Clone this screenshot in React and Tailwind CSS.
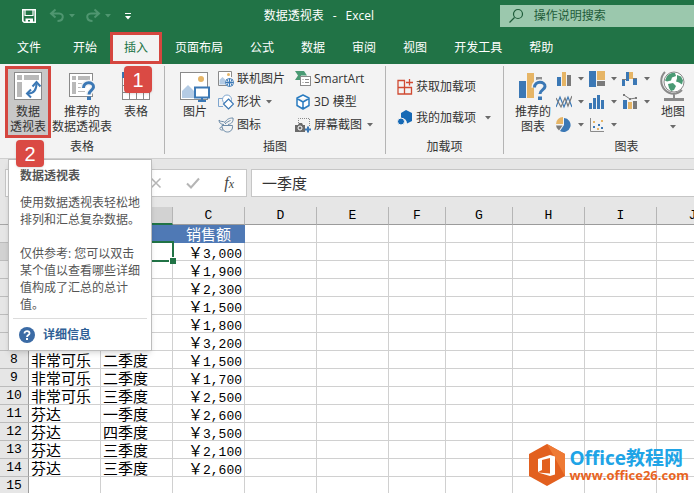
const tabs = ['页面布局', '公式', '数据', '审阅', '视图', '开发工具', '帮助'];

const columns = ['A', 'B', 'C', 'D', 'E', 'F', 'G', 'H', 'I', 'J'];

const rows = [
  ['', '', '销售额'],
  ['', '一季度', '3,000'],
  ['', '', '1,900'],
  ['', '', '2,300'],
  ['', '', '1,500'],
  ['', '', '1,800'],
  ['', '', '3,200'],
  ['非常可乐', '二季度', '1,500'],
  ['非常可乐', '二季度', '1,700'],
  ['非常可乐', '三季度', '2,500'],
  ['芬达', '一季度', '2,600'],
  ['芬达', '四季度', '3,500'],
  ['芬达', '三季度', '2,100'],
  ['芬达', '三季度', '2,600'],
  ['', '', ''],
];

const blue = '#3b78b5';
const sand = '#e6b566';
const grey = '#7a7a7a';

function Caret({ className = 'text-[#6a6a6a]' }) {
  return (
    <svg className={`shrink-0 ${className}`} width="6" height="4" viewBox="0 0 6 4" fill="currentColor">
      <path d="M0 0h6L3 3.5z" />
    </svg>
  );
}

function Icon({ size = 16, children }) {
  return (
    <svg className="shrink-0" width={size} height={size} viewBox={`0 0 ${size} ${size}`} fill="none">
      {children}
    </svg>
  );
}

function SaveIcon() {
  return (
    <Icon>
      <path d="M1.8 1.8h12.4v12.4H3.2l-1.4-1.4z" stroke="#fff" strokeWidth="1.6" />
      <path d="M4 2v5.5h8V2" stroke="#fff" strokeWidth="1.2" />
      <path d="M4.5 10.5h7.5V14H9v-2H7v2H4.5z" fill="#fff" />
    </Icon>
  );
}

function UndoIcon() {
  return (
    <Icon>
      <path d="M6.5 1.5 2 5.5l4.5 4M2.5 5.5H10c5.5 0 5 7.5-1.5 7.5" stroke="#4f9670" strokeWidth="2" />
    </Icon>
  );
}

function RedoIcon() {
  return (
    <Icon>
      <path d="M9.5 1.5 14 5.5l-4.5 4M13.5 5.5H6c-5.5 0-5 7.5 1.5 7.5" stroke="#4f9670" strokeWidth="2" />
    </Icon>
  );
}

function PivotIcon() {
  return (
    <Icon size={28}>
      <rect x=".5" y=".5" width="27" height="27" fill="#fff" stroke="#8a8a8a" />
      <path d="M3 3h5v5H3zM10 3h15v5H10zM3 10h5v15H3z" fill="#b9b9b9" />
      <path d="M14 21.5c6 0 8.5-3 8.5-10" stroke={blue} strokeWidth="2" />
      <path d="m18.5 14.5 4-4.5 4 4.5M17 17.5l-4 4 4 4" stroke={blue} strokeWidth="2" />
    </Icon>
  );
}

function SuggestPivotIcon() {
  return (
    <Icon size={28}>
      <rect x="1.5" y="1.5" width="23" height="23" fill="#fff" stroke="#8a8a8a" />
      <path d="M4 4h4v4H4zM10 4h12v4H10zM4 10h4v12H4z" fill="#b9b9b9" />
      <path d="M10 11.5h5M10 15.5h7M10 19.5h7" stroke="#b9b9b9" />
      <path d="M15.5 16c-.3-7 10.5-6.5 10-1-.3 3.5-4.5 3.5-4.5 8" stroke="#f3f3f3" strokeWidth="6" />
      <path d="M15.5 16c-.3-7 10.5-6.5 10-1-.3 3.5-4.5 3.5-4.5 7.5" stroke={blue} strokeWidth="3" />
      <rect x="19" y="24.5" width="4" height="3.5" fill={blue} />
    </Icon>
  );
}

function TableIcon() {
  return (
    <Icon size={28}>
      <rect x=".5" y=".5" width="27" height="27" fill="#fff" stroke="#8a8a8a" />
      <path d="M0 0h28v6H0z" fill={blue} />
      <path d="M0 13.5h28M0 20.5h28M7.5 6v22M14.5 6v22M21.5 6v22" stroke="#8a8a8a" />
    </Icon>
  );
}

function PictureIcon() {
  return (
    <Icon size={30}>
      <rect x=".5" y=".5" width="27" height="27" fill="#fff" stroke="#8a8a8a" />
      <circle cx="21" cy="7" r="3" fill={sand} />
      <path d="M2 26V19l6-6 7 7v6z" fill="#b4cbe4" />
      <rect x="15" y="15.5" width="14" height="10" fill="#fff" stroke={blue} strokeWidth="2" />
      <path d="M22 26v3M18 29h8" stroke={blue} strokeWidth="2" />
    </Icon>
  );
}

function OnlinePictureIcon() {
  return (
    <Icon>
      <path d="M8 14.5H.5V.5h13V6" fill="#fff" stroke="#8a8a8a" />
      <circle cx="10.5" cy="3.5" r="1.5" fill={sand} />
      <path d="M1.5 13.5V9l3-3 3 3v4.5z" fill="#b4cbe4" />
      <circle cx="11.5" cy="11.5" r="4" fill="#fff" stroke={blue} />
      <path d="M7.5 11.5h8M11.5 7.5v8M9 8.5c1.5 2 1.5 4 0 6M14 8.5c-1.5 2-1.5 4 0 6" stroke={blue} />
    </Icon>
  );
}

function ShapesIcon() {
  return (
    <Icon>
      <path d="M5 12.5H.5v-8H6" stroke="#7fa6cf" />
      <circle cx="9" cy="5.5" r="4.5" fill="#fff" stroke="#7fa6cf" />
      <path d="m10.5 5 5 5-5 5-5-5z" fill="#fff" stroke={blue} strokeWidth="1.2" />
    </Icon>
  );
}

function IconsIcon() {
  return (
    <Icon>
      <path d="M1 3c1.5 2.5 4 .5 6 2.5C9 1.5 12 1 15 1c.5 3-1 6-5 6.5" stroke="#6c8ba8" />
      <path d="M1 3c0 3 2 4.5 5 4.5M4 8.5h10.5C15 12 13 15 9.5 15S4 12 4 8.5zM4 10c-3 0-3 3.5 1 3M7 7c2-2 4-3 5.5-3.5" stroke="#6c8ba8" />
    </Icon>
  );
}

function SmartArtIcon() {
  return (
    <Icon>
      <path d="M0 0h9l3 4.5H6V9H0l3-4.5z" fill="#4a9a74" />
      <rect x="5.5" y="5.5" width="10" height="9" fill="#fff" stroke="#8a8a8a" />
      <path d="M7.5 8.5h1M10 8.5h4M7.5 11.5h1M10 11.5h4" stroke="#8a8a8a" />
    </Icon>
  );
}

function CubeIcon() {
  return (
    <Icon>
      <path d="m8 1 6 3v7.5L8 15l-6-3.5V4zM2 4.5 8 8l6-3.5M8 8v7" fill="#fff" stroke="#2b7cc0" strokeWidth="1.5" strokeLinejoin="round" />
    </Icon>
  );
}

function ScreenshotIcon() {
  return (
    <Icon>
      <path d="M3.5 6V1.5h11V10" stroke="#8a8a8a" strokeDasharray="1 1" />
      <path d="M0 8h3l1-2h3l1 2h2v7H0z" fill="#6a6a6a" />
      <circle cx="5" cy="11" r="2" fill="#6a6a6a" stroke="#fff" />
      <path d="M13 9.5v6M10 12.5h6" stroke={blue} strokeWidth="2" />
    </Icon>
  );
}

function GetAddinsIcon() {
  return (
    <Icon>
      <path d="M8 1.5H1v13.5h13.5V8.5H1M7.5 1.5V15M12.5 0v6.5M9 3.5h7" stroke="#d04a32" strokeWidth="1.3" />
    </Icon>
  );
}

function MyAddinsIcon() {
  return (
    <Icon>
      <path d="m9 0 6 3v8l-5 2.5c0-3.5-3-6-6-5.5V3z" fill="#1669b5" />
      <circle cx="4" cy="11.5" r="3.5" fill="#1669b5" stroke="#f3f3f3" />
    </Icon>
  );
}

function SuggestChartIcon() {
  return (
    <Icon size={28}>
      <path d="M0 9h7v17H0z" fill={blue} />
      <path d="M8 1h7v25H8z" fill={sand} />
      <path d="M17 5h6v7h-6z" fill="#909090" />
      <path d="M15.5 15.5c-.3-7 11-6.5 10.5-1-.3 3.5-5 3.5-5 8" stroke="#f3f3f3" strokeWidth="6" />
      <path d="M15.5 15.5c-.3-7 11-6.5 10.5-1-.3 3.5-5 3.5-5 7.5" stroke={blue} strokeWidth="3" />
      <path d="M17.5 23.5h7V28h-7z" fill="#f3f3f3" />
      <path d="M19 24.5h4V28h-4z" fill={blue} />
    </Icon>
  );
}

function GlobeIcon() {
  return (
    <Icon size={32}>
      <circle cx="17" cy="12" r="10" fill="#fff" stroke="#8a8a8a" />
      <path d="M10 6c3-3 6-3.5 8-3l1 3-4 1.5-1 3-4 1-2-1zM20 5l4 1.5 2 4-1 4-3-2-3-1 1-3zM11 14l5-1 3 3-2 4-3 1-2-3z" fill="#4a9a74" />
      <path d="M8 2C3 7 3 15 8 20s12 5 17 0M17 24v4" stroke="#8a8a8a" strokeWidth="2" />
      <path d="M7 29.5h20" stroke="#8a8a8a" strokeWidth="3" />
    </Icon>
  );
}

const chartTypes = [
  {
    name: '柱形图',
    art: (
      <>
        <path d="M1 6h4v9H1z" fill={blue} />
        <path d="M6 1h4v14H6z" fill={sand} />
        <path d="M11 4h4v11h-4z" fill={grey} />
      </>
    ),
  },
  {
    name: '层次结构图',
    art: (
      <>
        <path d="M0 0h7v16H0z" fill={blue} />
        <path d="M8 0h8v9H8z" fill={sand} />
        <path d="M8 10h8v5H8z" fill={grey} />
      </>
    ),
  },
  {
    name: '瀑布图',
    art: (
      <>
        <path d="M0 9h3v6H0zM11 8h4v6h-4z" fill={blue} />
        <path d="M4 1h3v9H4z" fill={blue} />
        <path d="M7 1h4v7H7z" fill={sand} />
        <path d="M0 8.5h4M11 7.5h4" stroke={grey} />
      </>
    ),
  },
  {
    name: '折线图',
    art: (
      <>
        <path d="m0 13 4-10 4 10 4-10 4 10" stroke={blue} strokeWidth="1.2" />
        <path d="m0 4 5 9 4-9 3 8 4-10" stroke={grey} strokeWidth="1.2" />
      </>
    ),
  },
  { name: '统计图', art: <path d="M0 9h3v6H0zM4 4h3v11H4zM8 1h3v14H8zM12 6h3v9h-3z" fill={blue} /> },
  {
    name: '组合图',
    art: (
      <>
        <path d="M1 6h4v9H1z" fill={blue} />
        <path d="M6 8h4v7H6z" fill={sand} />
        <path d="M11 7h4v8h-4z" fill={grey} />
        <path d="m2 1 6 4 6-1" stroke={grey} />
        <path d="M1 0h2v2H1zM7 4h2v2H7zM13 3h2v2h-2z" fill={grey} />
      </>
    ),
  },
  {
    name: '饼图',
    art: (
      <>
        <path d="M8 1a7 7 0 1 1-4 13l4-6z" fill={blue} />
        <path d="M7 0v7H0a7 7 0 0 1 7-7z" fill={sand} />
        <path d="M0 8.5h6.5L3 13.5a7 7 0 0 1-3-5z" fill={grey} />
      </>
    ),
  },
  {
    name: '散点图',
    art: (
      <>
        <path d="M1.5 1v13.5H15" stroke="#8a8a8a" />
        <path d="M4 9h2v2H4zM9 7h2v2H9zM12 10h2v2h-2z" fill={blue} />
        <path d="M4 4h2v2H4zM8 11h2v2H8zM12 3h2v2h-2z" fill={sand} />
      </>
    ),
  },
];

function Step({ className, children }) {
  return (
    <span
      className={`absolute z-20 flex h-[27px] w-7 items-center justify-center rounded-sm bg-[#da4a44] font-['Liberation_Sans',sans-serif] text-[20px] leading-none text-white shadow ${className}`}
    >
      {children}
    </span>
  );
}

function Group({ label, className, children }) {
  return (
    <section aria-label={label} className={`flex shrink-0 flex-col border-[#b4b4b4] ${className}`}>
      <div className="flex h-[73px]">{children}</div>
      <h2 className="text-center leading-[15px]">{label}</h2>
    </section>
  );
}

function BigButton({ icon, className, children }) {
  return (
    <button className={`flex h-[72px] shrink-0 flex-col items-center pt-1.5 leading-[15px] ${className}`}>
      <span className="h-7">{icon}</span>
      <span className="mt-1 whitespace-nowrap">{children}</span>
    </button>
  );
}

function SmallButton({ icon, caret, children }) {
  return (
    <button className="flex h-[23px] items-center gap-[3px] whitespace-nowrap">
      {icon}
      {children}
      {caret && <Caret className="ml-0.5 text-[#6a6a6a]" />}
    </button>
  );
}

function Tooltip() {
  return (
    <div
      role="tooltip"
      className="absolute top-[91px] left-0 z-10 w-[144px] border border-[#bdbdbd] bg-white px-1 pt-[7px] text-left leading-[17px] text-[#555] shadow-md"
    >
      <p className="px-[7px] font-semibold">数据透视表</p>
      <p className="mt-2.5 px-[7px]">使用数据透视表轻松地排列和汇总复杂数据。</p>
      <p className="mt-[17px] px-[7px]">仅供参考: 您可以双击某个值以查看哪些详细值构成了汇总的总计值。</p>
      <a href="#details" className="mt-[5px] flex h-8 items-center gap-2 border-t border-[#dcdcdc] px-1.5 font-bold text-[#2f5f96]">
        <svg width="16" height="16" viewBox="0 0 16 16" fill="none">
          <circle cx="8" cy="8" r="8" fill="#3b6ba5" />
          <path d="M5.5 6.5c0-3.5 5.5-3 5 0-.3 1.5-2.5 1.5-2.5 3.5" stroke="#fff" strokeWidth="1.8" />
          <path d="M7 11h2v2H7z" fill="#fff" />
        </svg>
        详细信息
      </a>
    </div>
  );
}

function TitleBar() {
  return (
    <header className="flex h-8 items-center text-white">
      <div className="flex w-[138px] shrink-0 items-center pl-[21px]">
        <button aria-label="保存"><SaveIcon /></button>
        <button aria-label="撤消" className="ml-3 flex items-center gap-1"><UndoIcon /><Caret className="text-[#4f9670]" /></button>
        <button aria-label="恢复" className="ml-2.5 flex items-center gap-1"><RedoIcon /><Caret className="text-[#4f9670]" /></button>
        <button aria-label="自定义快速访问工具栏" className="ml-3.5 flex flex-col items-center gap-0.5">
          <span className="h-px w-1.5 bg-white" />
          <Caret className="text-white" />
        </button>
      </div>
      <h1 className="flex flex-1 justify-center gap-[9px]">
        <span>数据透视表</span>
        <span>-</span>
        <span>Excel</span>
      </h1>
      <label className="flex h-[22px] w-[28%] items-center gap-2.5 bg-[#9bc8ad] pl-2 text-[#1f5c3a]">
        <svg className="shrink-0" width="16" height="16" viewBox="0 0 16 16" fill="none" stroke="currentColor" strokeWidth="1.2">
          <circle cx="10" cy="6" r="4.5" />
          <path d="m6.5 9.5-5 5" />
        </svg>
        <input
          aria-label="操作说明搜索"
          placeholder="操作说明搜索"
          className="min-w-0 flex-1 bg-transparent outline-none placeholder:text-[#1f5c3a]"
        />
      </label>
    </header>
  );
}

function Tabs() {
  return (
    <nav className="flex h-8 gap-px pl-1 whitespace-nowrap text-white">
      <button className="mr-[5px] px-[13px]">文件</button>
      <button className="px-[13px]">开始</button>
      <button className="relative -mx-px border-3 border-[#d5463f] bg-[#f3f3f3] px-[11px] text-[#217346]">
        插入
        <Step className="top-[31px] left-[11px]">1</Step>
      </button>
      {tabs.map((tab) => (
        <button key={tab} className="px-[13px]">{tab}</button>
      ))}
    </nav>
  );
}

function Ribbon() {
  return (
    <div className="flex h-[95px] border-b border-[#cfcfcf] bg-[#f3f3f3] pt-0.5 pb-1 text-[#333]">
      <Group label="表格" className="w-[165px] border-r">
        <div className="relative ml-[5px] shrink-0">
          <button className="flex h-[72px] w-[46px] flex-col items-center border-3 border-[#d5463f] bg-[#c8c8c8] pt-[3px] leading-[15px] whitespace-nowrap">
            <PivotIcon />
            <span className="mt-1">数据<br />透视表</span>
          </button>
          <Step className="top-[74px] left-[11px]">2</Step>
          <div className="absolute top-0.5 left-[3px]"><Tooltip /></div>
        </div>
        <BigButton icon={<SuggestPivotIcon />} className="w-[62px]">推荐的<br />数据透视表</BigButton>
        <BigButton icon={<TableIcon />} className="w-[46px]">表格</BigButton>
      </Group>

      <Group label="插图" className="w-[221px] border-r">
        <BigButton icon={<PictureIcon />} className="ml-3.5 w-8">图片</BigButton>
        <div className="ml-[7px] flex w-[77px] shrink-0 flex-col pt-px">
          <SmallButton icon={<OnlinePictureIcon />}>联机图片</SmallButton>
          <SmallButton icon={<ShapesIcon />} caret>形状</SmallButton>
          <SmallButton icon={<IconsIcon />}>图标</SmallButton>
        </div>
        <div className="flex flex-col pt-px">
          <SmallButton icon={<SmartArtIcon />}>SmartArt</SmallButton>
          <SmallButton icon={<CubeIcon />}>3D 模型</SmallButton>
          <SmallButton icon={<ScreenshotIcon />} caret>屏幕截图</SmallButton>
        </div>
      </Group>

      <Group label="加载项" className="w-[118px] border-r">
        <div className="flex flex-col gap-2 pt-[9px] pl-[11px]">
          <SmallButton icon={<GetAddinsIcon />}>获取加载项</SmallButton>
          <button className="flex h-[23px] items-center gap-[3px] whitespace-nowrap">
            <MyAddinsIcon />
            我的加载项
            <Caret className="ml-1.5 text-[#6a6a6a]" />
          </button>
        </div>
      </Group>

      <Group label="图表" className="w-[245px]">
        <BigButton icon={<SuggestChartIcon />} className="ml-2.5 w-[38px]">推荐的<br />图表</BigButton>
        <div className="ml-1 grid grid-cols-[33px_33px_33px] content-start pt-px">
          {chartTypes.map((type) => (
            <button key={type.name} aria-label={type.name} className="flex h-[23px] items-center gap-1.5">
              <Icon>{type.art}</Icon>
              <Caret />
            </button>
          ))}
        </div>
        <button className="ml-0.5 flex h-[72px] w-8 flex-col items-center pt-1 leading-[15px]">
          <GlobeIcon />
          <span className="mt-0.5">地图</span>
          <Caret className="mt-1.5 text-[#6a6a6a]" />
        </button>
      </Group>
    </div>
  );
}

function FormulaBar() {
  return (
    <div className="flex h-12 gap-1 bg-[#e6e6e6] py-2.5 pl-[5px]">
      <div className="flex w-[242px] shrink-0 items-center justify-end gap-6 border border-[#c6c6c6] bg-white pr-3">
        <button aria-label="取消">
          <svg width="12" height="12" viewBox="0 0 12 12" stroke="#b5b5b5" strokeWidth="1.5"><path d="m1.5 1.5 9 9M10.5 1.5l-9 9" /></svg>
        </button>
        <button aria-label="输入">
          <svg width="14" height="12" viewBox="0 0 14 12" fill="none" stroke="#b5b5b5" strokeWidth="2"><path d="m1 6.5 4 4 8-9" /></svg>
        </button>
        <button className="font-['Liberation_Serif',serif] text-[16px] leading-none text-[#444] italic">
          f<span className="text-[12px]">x</span>
        </button>
      </div>
      <input
        aria-label="编辑栏"
        defaultValue="一季度"
        className="min-w-0 flex-1 border border-r-0 border-[#c6c6c6] bg-white px-2.5 text-[15px] text-[#333] outline-none"
      />
    </div>
  );
}

function Cell({ row, col, value }) {
  const filled = row === 0 && col < 3;
  const selected = row === 1 && col === 1;
  const amount = row > 0 && col === 2 && value;
  return (
    <td
      className={`relative border-r border-b p-0 whitespace-nowrap ${
        filled ? 'border-[#4f79b5] bg-[#4f79b5] text-white' : 'border-[#d0d0d0]'
      }`}
    >
      <div className={`flex h-[17px] px-0.5 leading-[17px] ${filled ? 'justify-center' : ''} ${amount ? 'items-baseline justify-end' : 'items-center'}`}>
        {amount ? (
          <>
            <span>￥</span>
            <span className="font-['Liberation_Mono',monospace] text-[13px]">{value}</span>
          </>
        ) : (
          value
        )}
      </div>
      {selected && (
        <span className="absolute -inset-x-0.5 -inset-y-0.5 z-1 border-2 border-[#217346]">
          <span className="absolute -right-1 -bottom-1 size-[7px] border-t border-l border-white bg-[#217346]" />
        </span>
      )}
    </td>
  );
}

function Sheet() {
  return (
    <table className="w-full min-w-[729px] table-fixed border-separate border-spacing-0 bg-white font-['Noto_Sans_CJK_SC',sans-serif] text-[15px] text-black">
      <colgroup>
        <col className="w-[29px]" />
        <col className="w-[72px]" />
        <col className="w-[72px]" />
        <col className="w-[72px]" />
        <col className="w-[72px]" />
        <col className="w-[72px]" />
        <col className="w-[57px]" />
        <col className="w-[67px]" />
        <col className="w-[72px]" />
        <col className="w-[72px]" />
        <col />
      </colgroup>
      <thead className="font-['Liberation_Mono',monospace] text-[13px]">
        <tr>
          <th className="h-[18px] border-r border-b border-[#a6a6a6] bg-[#e6e6e6] p-0" />
          {columns.map((col) => (
            <th
              key={col}
              scope="col"
              className={`h-[18px] border-r border-r-[#b5b5b5] p-0 font-normal ${
                col === 'B'
                  ? 'border-b-2 border-b-[#217346] bg-[#d2d2d2] leading-4'
                  : 'border-b border-b-[#9b9b9b] bg-[#e6e6e6] leading-[17px]'
              }`}
            >
              {col}
            </th>
          ))}
        </tr>
      </thead>
      <tbody>
        {rows.map((row, r) => (
          <tr key={r}>
            <th
              scope="row"
              className={`h-[18px] border-r border-b border-r-[#9b9b9b] border-b-[#bcbcbc] p-0 font-['Liberation_Mono',monospace] text-[13px] leading-[17px] font-normal ${
                r === 1 ? 'bg-[#d2d2d2]' : 'bg-[#e6e6e6]'
              }`}
            >
              {r + 1}
            </th>
            {columns.map((col, c) => (
              <Cell key={col} row={r} col={c} value={row[c]} />
            ))}
          </tr>
        ))}
      </tbody>
    </table>
  );
}

function Watermark() {
  return (
    <div className="absolute right-[5px] bottom-[7px] z-10 flex items-center gap-1 font-bold whitespace-nowrap">
      <svg width="36" height="42" viewBox="0 0 36 42">
        <path d="M18 0 36 10v22L18 42 0 32V10z" fill="#e2601f" />
        <path d="M18 0 36 10v22z" fill="#ee7a35" />
        <path d="m9 15 12-4 5 1.5v18L21 32 9 28.5l12 1V14l-8 2v10l-4 2z" fill="#fff" />
      </svg>
      <div>
        <p className="text-[19px] leading-[20px] text-[#20a4e6]">Office教程网</p>
        <p className="text-[13px] leading-[15px] text-[#e8641f]">www.office26.com</p>
      </div>
    </div>
  );
}

export default function App() {
  return (
    <div className="relative flex h-screen flex-col overflow-hidden bg-[#217346] font-['Open_Sans','Noto_Sans_CJK_SC',sans-serif] text-[12px]">
      <TitleBar />
      <Tabs />
      <Ribbon />
      <FormulaBar />
      <main className="flex-1 overflow-hidden bg-white">
        <Sheet />
      </main>
      <Watermark />
    </div>
  );
}
